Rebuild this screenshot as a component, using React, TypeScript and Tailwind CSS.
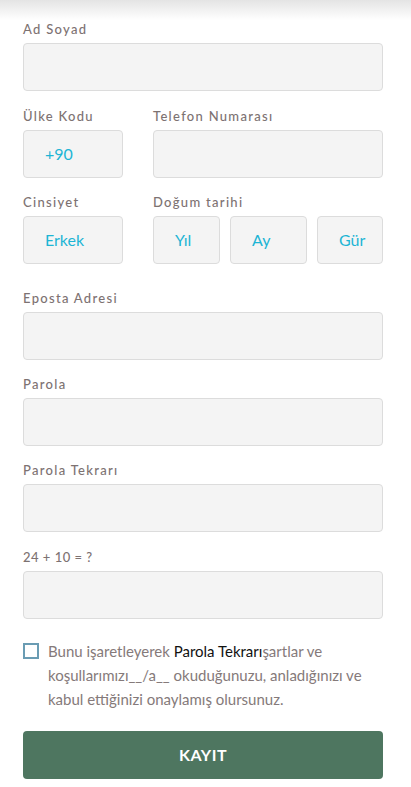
import React from 'react';

const font = { fontFamily: 'Lato, "Noto Sans", sans-serif' };

const Label = ({ children, spaced = true }: { children: React.ReactNode; spaced?: boolean }) => (
  <div className={`h-[16px] mb-[6px] text-[13px] leading-[16px] text-[#7d7272] font-medium ${spaced ? 'tracking-[1.3px]' : 'tracking-[0.5px]'}`}>
    {children}
  </div>
);

const Box = ({ value, className = '' }: { value?: string; className?: string }) => (
  <div className={`h-[48px] rounded-[4px] border border-[#dcdcdc] bg-[#f4f4f4] flex items-center pl-[21px] text-[16px] text-[#1db5d4] ${className}`}>
    {value}
  </div>
);

const App: React.FC = () => {
  return (
    <div className="w-full min-h-[787px] bg-white relative overflow-hidden" style={font}>
      <div className="absolute top-0 left-0 right-0 h-[20px] bg-gradient-to-b from-[#e4e4e4] to-white" />
      <div className="relative px-[23px] pt-[21px] pb-[8px]">
        <div className="w-[360px]">
          <Label>Ad Soyad</Label>
          <Box />

          <div className="flex gap-[30px] mt-[17px]">
            <div className="w-[100px]">
              <Label>Ülke Kodu</Label>
              <Box value="+90" className="bg-[#e9ecef]" />
            </div>
            <div className="flex-1">
              <Label>Telefon Numarası</Label>
              <Box />
            </div>
          </div>

          <div className="flex gap-[30px] mt-[16px]">
            <div className="w-[100px]">
              <Label>Cinsiyet</Label>
              <Box value="Erkek" />
            </div>
            <div className="flex-1">
              <Label>Doğum tarihi</Label>
              <div className="flex gap-[10px]">
                <Box value="Yıl" className="w-[67px]" />
                <Box value="Ay" className="w-[77px]" />
                <Box value="Gür" className="w-[66px]" />
              </div>
            </div>
          </div>

          <div className="mt-[26px]">
            <Label>Eposta Adresi</Label>
            <Box />
          </div>
          <div className="mt-[16px]">
            <Label>Parola</Label>
            <Box />
          </div>
          <div className="mt-[16px]">
            <Label>Parola Tekrarı</Label>
            <Box />
          </div>
          <div className="mt-[17px]">
            <Label spaced={false}>24 + 10 = ?</Label>
            <Box />
          </div>

          <div className="flex mt-[20px]">
            <div className="w-[16px] h-[16px] mt-[4px] border-2 border-[#6a9cb3] bg-white shrink-0" />
            <p className="ml-[9px] text-[15px] leading-[24px] text-[#857a7a]">
              Bunu işaretleyerek <span className="text-[#111]">Parola Tekrarı</span>şartlar ve koşullarımızı__/a__ okuduğunuzu, anladığınızı ve kabul ettiğinizi onaylamış olursunuz.
            </p>
          </div>

          <button className="mt-[20px] w-full h-[48px] rounded-[4px] bg-[#4e7660] text-white text-[16px] font-bold tracking-[0.5px]">
            KAYIT
          </button>
        </div>
      </div>
    </div>
  );
};

export default App;
